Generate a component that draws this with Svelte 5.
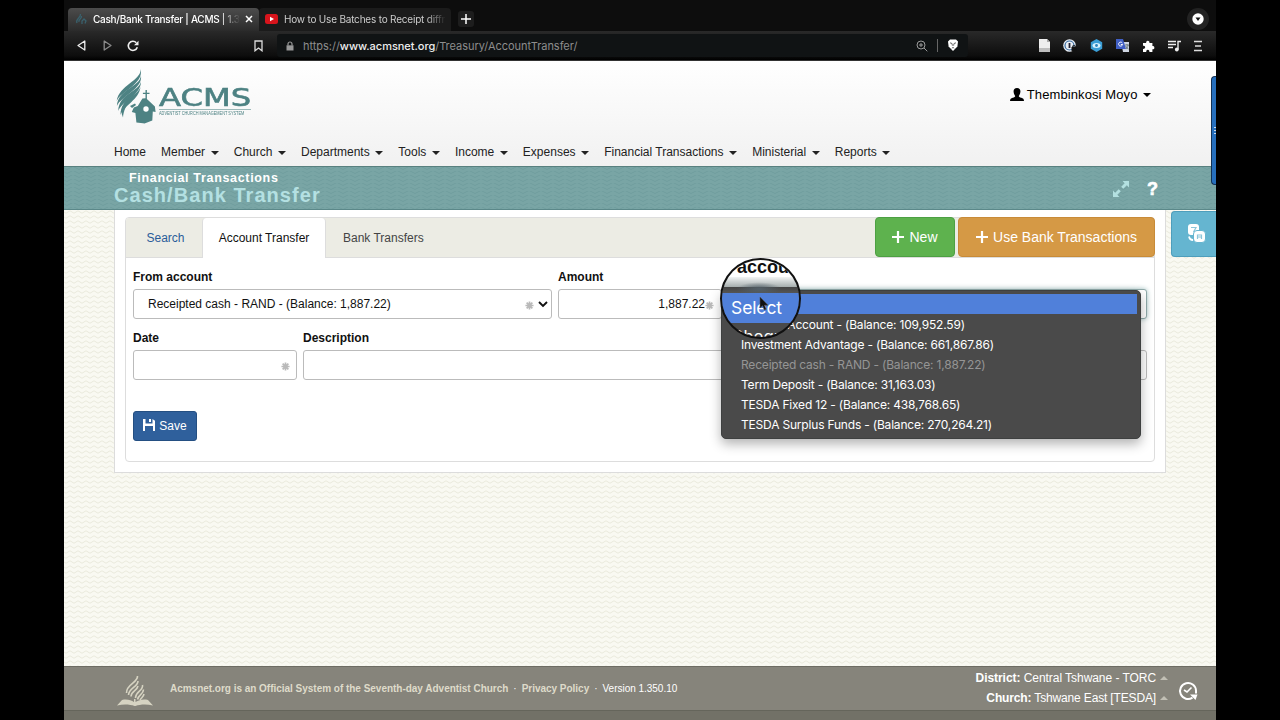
<script>
    let menu = [
        { label: "Home", caret: false },
        { label: "Member", caret: true },
        { label: "Church", caret: true },
        { label: "Departments", caret: true },
        { label: "Tools", caret: true },
        { label: "Income", caret: true },
        { label: "Expenses", caret: true },
        { label: "Financial Transactions", caret: true },
        { label: "Ministerial", caret: true },
        { label: "Reports", caret: true },
    ];

    let accounts = [
        { name: "Cheque Account - (Balance: 109,952.59)" },
        { name: "Investment Advantage - (Balance: 661,867.86)" },
        { name: "Receipted cash - RAND - (Balance: 1,887.22)", disabled: true },
        { name: "Term Deposit - (Balance: 31,163.03)" },
        { name: "TESDA Fixed 12 - (Balance: 438,768.65)" },
        { name: "TESDA Surplus Funds - (Balance: 270,264.21)" },
    ];
</script>

{#snippet star()}
    <svg class="star" width="9" height="9" viewBox="0 0 10 10">
        <path d="M5 .5v9M.5 5h9M1.8 1.8l6.4 6.4M8.2 1.8 1.8 8.2" stroke="#b9b9b9" stroke-width="1.9" />
    </svg>
{/snippet}

<div class="screen">
    <div class="tabs">
        <div class="tab active">
            <svg class="favicon" width="12" height="12" viewBox="0 0 12 12" fill="none" stroke="#39616d">
                <path d="M2 10C0 6 6 5 5.5 1M4 9C3 6 7 6 6.500 3M7 11V8l2-2 2 2-1 2.500" stroke-width="1.300" />
            </svg>
            <span class="tab-title first">Cash/Bank Transfer | ACMS | 1.3</span>
            <svg width="8" height="8" viewBox="0 0 8 8"><path d="m1 1 6 6m0-6L1 7" stroke="#fff" stroke-width="1.5" /></svg>
        </div>
        <div class="tab other">
            <svg width="13" height="10" viewBox="0 0 13 10"><rect width="13" height="10" rx="2.500" fill="#d8141c" /><path d="M5 2.800v4.400L9 5z" fill="#fff" /></svg>
            <span class="tab-title second">How to Use Batches to Receipt diffr</span>
        </div>
        <div class="new-tab">
            <svg width="10" height="10" viewBox="0 0 10 10"><path d="M5 0v10M0 5h10" stroke="#fff" stroke-width="1.500" /></svg>
        </div>
        <div class="tab-menu">
            <svg width="12" height="12" viewBox="0 0 12 12"><circle cx="6" cy="6" r="5.700" fill="#fff" /><path d="M3.500 4.500h5L6 8z" fill="#111" /></svg>
        </div>
    </div>

    <div class="toolbar">
        <svg class="back" width="9" height="11" viewBox="0 0 9 11" fill="none" stroke="#eee" stroke-width="1.300"><path d="M7.800 1v9L1 5.500z" stroke-linejoin="round" /></svg>
        <svg class="forward" width="9" height="11" viewBox="0 0 9 11" fill="none" stroke="#8b8b8b" stroke-width="1.300"><path d="M1.200 1v9L8 5.500z" stroke-linejoin="round" /></svg>
        <svg class="reload" width="12" height="12" viewBox="0 0 12 12"><path d="M10.300 7.300A4.600 4.600 0 1 1 9.300 2.700" fill="none" stroke="#eee" stroke-width="1.600" /><path d="M11.500.7v4.500H7z" fill="#eee" /></svg>
        <svg class="bookmark" width="9" height="12" viewBox="0 0 9 12"><path d="M1 1h7v9.800L4.500 8 1 10.800z" fill="none" stroke="#ddd" stroke-width="1.300" /></svg>
        <div class="address">
            <svg width="8" height="10" viewBox="0 0 8 10"><path d="M.5 4.300h7V9.500h-7z" fill="#999" /><path d="M2 4.500V3a2 2 0 0 1 4 0v1.500" fill="none" stroke="#999" stroke-width="1.200" /></svg>
            <span class="url">https://<b>www.acmsnet.org</b>/Treasury/AccountTransfer/</span>
            <svg width="12" height="12" viewBox="0 0 12 12" fill="none" stroke="#9a9a9a"><circle cx="5" cy="5" r="4" /><path d="M8 8l3.300 3.300M3 5h4M5 3v4" /></svg>
            <i class="divider"></i>
            <svg width="12" height="13" viewBox="0 0 12 13"><path d="M1 2.500 3 .6h6l2 1.900-.6 5L6 12 1.600 7.500z" fill="#fff" /><path d="M3 3.800l2 .7.4 2.200M9 3.800l-2 .7-.4 2.200M4.800 9.200 6 8.400l1.200.8" stroke="#444" stroke-width=".8" fill="none" /></svg>
        </div>
        <div class="extensions">
            <svg width="11" height="13" viewBox="0 0 11 13"><path d="M0 0h8l3 3v10H0z" fill="#eee" /><path d="M0 9h11v4H0z" fill="#bdbdbd" /><path d="M8 0v3h3" fill="#aaa" /></svg>
            <svg width="14" height="13" viewBox="0 0 14 13"><circle cx="6.500" cy="6.500" r="6.300" fill="#e9eef4" /><circle cx="6.500" cy="6.500" r="4.500" fill="none" stroke="#356aa0" stroke-width="1.200" /><path d="M6.500 4v5" stroke="#223" stroke-width="1.800" /><path d="M8.500 8h5v4.500h-5z" fill="#111" /><path d="M9.800 8V6.800h2.400V8" fill="none" stroke="#111" /></svg>
            <svg width="13" height="13" viewBox="0 0 13 13"><path d="m6.500 0 5.700 3.200v6.600L6.500 13 .8 9.800V3.200z" fill="#3b9ed6" /><ellipse cx="6.500" cy="6.500" rx="4" ry="2.500" fill="#d7f2ff" /><circle cx="6.500" cy="6.500" r="1.400" fill="#2a83bd" /></svg>
            <svg width="14" height="13" viewBox="0 0 14 13"><path d="M5 3h8v10H7z" fill="#cfd6e2" /><path d="M0 0h7l3 10H0z" fill="#405fc4" /><path d="M6.300 4A2 2 0 1 0 6.600 5.500H4.800" fill="none" stroke="#fff" /><path d="M9 6h4M11 5v1M12 6c0 2-1 3-2 4M9.800 7c.5 1.500 1.500 2.500 2.700 3" fill="none" stroke="#566" stroke-width=".8" /></svg>
            <svg width="12" height="12" viewBox="0 0 12 12"><path d="M0 3h3.200a1.700 1.700 0 1 1 3.200 0h3v3.100a1.600 1.600 0 1 1 0 3.100V12H6.300a1.600 1.600 0 1 0-3 0H0V8.800a1.600 1.600 0 1 0 0-3z" fill="#fff" /></svg>
            <svg width="13" height="12" viewBox="0 0 13 12"><path d="M0 1.500h8M0 4.500h8M0 7.500h5M10 9.500V1.500h3" fill="none" stroke="#eee" stroke-width="1.400" /><circle cx="8.800" cy="9.500" r="1.900" fill="#eee" /></svg>
            <svg width="8" height="12" viewBox="0 0 8 12"><path d="M0 1.500h8M1 6h6M0 10.500h8" stroke="#ddd" stroke-width="1.300" /></svg>
        </div>
    </div>

    <header>
        <div class="brand-row">
            <div class="logo">
                <svg width="43" height="56" viewBox="0 0 43 56" fill="#4d8283">
                    <path d="M24.700 0C25 12 3 16 .7 32 5 22 28 15 24.700 0z" />
                    <path d="M25 6.500C24 18 2 20 .9 37 5 27 27 20 25 6.500z" />
                    <path d="M25 12.500C23 23 3 24 2.200 42 6 32 25 26 25 12.500z" />
                    <path d="M24.500 18C21 28 5 28 4.500 46 8 36 23 31 24.500 18z" />
                    <path d="M16 29C8 34 3 39 7 48.500 7.500 42 10 36 16 29z" />
                    <path d="M29.500 21h1.400v2.700h2.600v1.200h-2.600V30l8 7.500.7 5.500-2.800-.5-.5 9-7.800 3-1.500-.2-6.600-.8-1-9.500-3.600-1 2-4.500 4-1.500 4.600-7.500 3.100-.2v-4.400h-2.600v-1.200h2.600z" />
                    <path d="M14 37l5-2.500 1 1.500-4 3z" />
                    <circle cx="30" cy="40" r="2.700" fill="#fff" />
                </svg>
                <div class="wordmark">
                    <div class="acms"><span>ACMS</span></div>
                    <span class="tagline">ADVENTIST CHURCH MANAGEMENT SYSTEM</span>
                </div>
            </div>
            <div class="user">
                <svg width="14" height="13" viewBox="0 0 14 13"><path d="M7 0c2.500 0 3.600 1.600 3.400 3.800C10.200 6 9.500 7 8.800 8c0 1 .8 1.200 2.500 1.800C13 10.500 14 11 14 13H0c0-2 1-2.500 2.700-3.200C4.400 9.200 5.200 9 5.200 8c-.7-1-1.400-2-1.600-4.200C3.400 1.600 4.500 0 7 0z" /></svg>
                <span>Thembinkosi Moyo</span>
                <i class="caret"></i>
            </div>
        </div>
        <nav>
            {#each menu as item}
                <a href="#top">{item.label}{#if item.caret}<i class="caret"></i>{/if}</a>
            {/each}
        </nav>
    </header>

    <div class="title-band">
        <div class="titles">
            <div class="section">Financial Transactions</div>
            <h1>Cash/Bank Transfer</h1>
        </div>
        <svg class="expand" width="16" height="16" viewBox="0 0 16 16" fill="#b3e0e0"><path d="M16 0v6.500l-2.200-2.200L10.300 7.800 8.200 5.700l3.500-3.500L9.500 0zM0 16V9.500l2.200 2.200 3.500-3.500 2.100 2.100-3.500 3.500L6.500 16z" /></svg>
        <span class="help">?</span>
    </div>

    <main>
        <div class="page">
            <div class="panel">
                <div class="panel-tabs">
                    <a class="ptab search" href="#search">Search</a>
                    <a class="ptab current" href="#transfer">Account Transfer</a>
                    <a class="ptab bank" href="#bank">Bank Transfers</a>
                    <div class="actions">
                        <button class="new">
                            <svg width="12" height="12" viewBox="0 0 12 12"><path d="M6 0v12M0 6h12" stroke="#fff" stroke-width="2.200" /></svg>
                            <span>New</span>
                        </button>
                        <button class="use-bank">
                            <svg width="12" height="12" viewBox="0 0 12 12"><path d="M6 0v12M0 6h12" stroke="#fff" stroke-width="2.200" /></svg>
                            <span>Use Bank Transactions</span>
                        </button>
                    </div>
                </div>

                <div class="form">
                    <div class="row accounts">
                        <div class="field">
                            <span class="label">From account</span>
                            <div class="input">
                                <span>Receipted cash - RAND - (Balance: 1,887.22)</span>
                                {@render star()}
                                <svg class="chevron" width="10" height="7" viewBox="0 0 10 7"><path d="m1 1 4 4 4-4" fill="none" stroke="#111" stroke-width="1.900" /></svg>
                            </div>
                        </div>
                        <div class="field">
                            <span class="label">Amount</span>
                            <div class="input amount">
                                <span>1,887.22</span>
                                {@render star()}
                            </div>
                        </div>
                        <div class="field">
                            <span class="label"></span>
                            <div class="input target"></div>
                            <div class="dropdown">
                                <div class="option selected"></div>
                                {#each accounts as account}
                                    <div class="option" class:disabled={account.disabled}>{account.name}</div>
                                {/each}
                            </div>
                            <div class="lens">
                                <div class="lens-label">accou</div>
                                <div class="lens-edge"></div>
                                <div class="lens-option">Select</div>
                                <div class="lens-next">Cheque</div>
                                <svg class="pointer" width="10" height="15" viewBox="0 0 10 15"><path d="M1 1v11l2.600-2.300L5.300 14l1.900-.8-1.700-4H9z" fill="#111" stroke="#555" stroke-width=".6" /></svg>
                            </div>
                        </div>
                    </div>
                    <div class="row details">
                        <div class="field">
                            <span class="label">Date</span>
                            <div class="input date">{@render star()}</div>
                        </div>
                        <div class="field">
                            <span class="label">Description</span>
                            <div class="input"></div>
                        </div>
                    </div>
                    <button class="save">
                        <svg width="12" height="12" viewBox="0 0 12 12"><path d="M0 0h2.500v4.500h7V0L12 1.800V12h-2V7H2v5H0zM6 0h2v3H6z" fill="#fff" /></svg>
                        <span>Save</span>
                    </button>
                </div>
            </div>
        </div>
    </main>

    <footer>
        <svg class="flame" width="38" height="32" viewBox="0 0 38 32" fill="none" stroke="#d6d3c2" stroke-width="1.600">
            <path d="M21.500 1C22 8 10 9 10.500 18M22 6c0 6-9 7-9.500 14M22 11c-1 5-7 5-7 10.500M26.500 10c1 6-7 6-7 13M27.500 14.500c0 5-5 5-6 10M28 19c-.5 3-3 4-4 6" />
            <path d="M1 30.500 6 25c5-1 9 0 12 2v-3h1.500v3C23 25 27 24 32 25l5 5.500c-7-1.500-13-1-17.500.5h-1C14 29.500 8 29 1 30.500z" fill="#d6d3c2" stroke="none" />
        </svg>
        <div class="about">
            <b>Acmsnet.org is an Official System of the Seventh-day Adventist Church</b>
            <span>·</span>
            <b>Privacy Policy</b>
            <span>·</span>
            <span class="version">Version 1.350.10</span>
        </div>
        <div class="place">
            <div class="district"><b>District:</b> Central Tshwane - TORC<i class="up"></i></div>
            <div class="church"><b>Church:</b> Tshwane East [TESDA]<i class="up"></i></div>
        </div>
        <svg class="clock" width="20" height="20" viewBox="0 0 20 20" fill="none" stroke="#fff" stroke-width="2"><path d="M14.500 16.600A8 8 0 1 1 18 9.500v3" /><path d="m6 9 3 2 4.500-4.500" stroke-width="1.600" /><path d="M12 13.500h7.500L17.500 19z" fill="#fff" stroke="none" /></svg>
    </footer>

    <div class="side-handle"><i></i></div>
    <div class="translate">
        <svg width="19" height="19" viewBox="0 0 19 19"><rect x="1" y="0" width="11" height="11" rx="3" fill="#fff" /><path d="M4 3.500h5L6.500 8" fill="none" stroke="#8cc6da" stroke-width="1.200" /><path d="M2 12.500c.5 2.500 2 3.500 4 3.500" fill="none" stroke="#fff" stroke-width="1.800" /><rect x="6.500" y="6.500" width="12" height="12" rx="3.500" fill="#fff" stroke="#65b5d0" /><path d="M10.500 15v-4h4v4M10.500 13h4" fill="none" stroke="#8cc6da" stroke-width="1.200" /></svg>
    </div>
</div>

<style>
    :global(body) {
        background: #000;
        overflow: hidden;
    }

    .screen {
        position: relative;
        box-sizing: border-box;
        width: 1152px;
        height: 720px;
        margin: 0 64px;
        display: flex;
        flex-direction: column;
        overflow: hidden;
        font-family: "Liberation Sans", Arial, sans-serif;
        font-size: 12px;
        color: #222;
    }

    svg {
        display: block;
        flex-shrink: 0;
    }

    a {
        color: inherit;
        text-decoration: none;
    }

    button {
        font-family: inherit;
        border: 0;
        padding: 0;
        display: flex;
        align-items: center;
        color: #fff;
    }

    /* browser chrome */
    .tabs {
        display: flex;
        height: 31px;
        padding: 8px 4px 0;
        box-sizing: border-box;
        background: #0d0d0d;
        font-family: Inter, sans-serif;
        font-size: 10px;
    }

    .tab {
        display: flex;
        align-items: center;
        box-sizing: border-box;
        height: 23px;
        padding-bottom: 2px;
        border-radius: 4px 4px 0 0;
    }

    .tab.active {
        width: 191px;
        padding: 0 6px 2px 7px;
        background: linear-gradient(#4c4c4c, #2b2b2b);
        color: #fff;
    }

    .favicon {
        margin-right: 6px;
    }

    .tab-title {
        overflow: hidden;
        white-space: nowrap;
    }

    .tab-title.first {
        width: 148px;
        margin-right: 5px;
        font-weight: 500;
        letter-spacing: -0.27px;
        -webkit-mask: linear-gradient(90deg, #000 86%, transparent);
        mask: linear-gradient(90deg, #000 86%, transparent);
    }

    .tab.other {
        width: 192px;
        padding-left: 6px;
        background: #1b1b1b;
        color: #ccc;
    }

    .tab-title.second {
        width: 162px;
        margin-left: 6px;
        letter-spacing: -0.2px;
        -webkit-mask: linear-gradient(90deg, #000 88%, transparent);
        mask: linear-gradient(90deg, #000 88%, transparent);
    }

    .new-tab {
        display: flex;
        align-items: center;
        justify-content: center;
        width: 16px;
        height: 16px;
        margin: 3px 0 0 7px;
        border-radius: 3px;
        background: #1d1d1d;
    }

    .tab-menu {
        display: flex;
        align-items: center;
        justify-content: center;
        width: 22px;
        height: 22px;
        margin-left: auto;
        margin-right: 3px;
        border-radius: 50%;
        background: #222;
    }

    .toolbar {
        display: flex;
        align-items: center;
        box-sizing: border-box;
        height: 30px;
        padding: 1px 14px 0 13px;
        border-bottom: 1px solid #333;
        background: linear-gradient(#292929, #0d0d0d 85%, #000);
    }

    .forward {
        margin-left: 17px;
    }

    .reload {
        margin-left: 15px;
    }

    .bookmark {
        margin-left: 115px;
    }

    .address {
        display: flex;
        align-items: center;
        box-sizing: border-box;
        width: 691px;
        height: 23px;
        margin-left: 14px;
        padding: 0 9px;
        border-radius: 3px;
        background: #101314;
        font-family: Inter, sans-serif;
        font-size: 11px;
        color: #8d8d8d;
    }

    .url {
        flex: 1;
        margin-left: 9px;
        letter-spacing: -0.03px;
    }

    .url b {
        font-weight: 500;
        color: #eee;
    }

    .divider {
        width: 1px;
        height: 13px;
        margin: 0 9px 0 9px;
        background: #666;
    }

    .extensions {
        display: flex;
        align-items: center;
        justify-content: space-between;
        width: 163px;
        margin-left: auto;
    }

    /* site header */
    header {
        height: 105px;
        padding: 0 50px;
        background: linear-gradient(#fff, #f1f1f1);
    }

    .brand-row {
        display: flex;
        justify-content: space-between;
        height: 84px;
    }

    .logo {
        display: flex;
        padding: 8px 0 0 2px;
    }

    .wordmark {
        display: flex;
        flex-direction: column;
        color: #4d8283;
        padding-top: 15px;
    }

    .acms {
        height: 25px;
        width: 92px;
        border-bottom: 1px solid #9cb9b9;
        font-family: "DejaVu Sans", sans-serif;
        font-size: 24px;
        line-height: 29px;
        -webkit-text-stroke: 0.6px #4d8283;
    }

    .acms span {
        display: inline-block;
        transform: scaleX(1.34);
        transform-origin: left;
    }

    .tagline {
        margin-top: 1px;
        font-size: 4.500px;
        line-height: 6px;
        white-space: nowrap;
        transform: scaleX(0.86);
        transform-origin: left;
        width: 92px;
    }

    .user {
        display: flex;
        align-items: center;
        height: 20px;
        margin-top: 24px;
        padding-right: 15px;
        font-size: 13px;
        letter-spacing: 0.1px;
        color: #000;
    }

    .user span {
        margin-left: 3px;
    }

    .caret {
        display: inline-block;
        width: 0;
        height: 0;
        margin-left: 5.500px;
        border: 4px solid transparent;
        border-top-color: currentColor;
        border-bottom: 0;
        vertical-align: 1px;
    }

    nav {
        display: flex;
        gap: 15.100px;
        line-height: 14px;
    }

    nav a {
        white-space: nowrap;
    }

    .title-band {
        display: flex;
        align-items: center;
        box-sizing: border-box;
        height: 44px;
        padding: 0 58px 0 50px;
        border-top: 1px solid #58807f;
        border-bottom: 1px solid #5b8889;
        background: #79a5a5 url("data:image/svg+xml,%3Csvg xmlns='http://www.w3.org/2000/svg' width='12' height='4'%3E%3Cpath d='M0 1q3 3 6 0t6 0' fill='none' stroke='%23709d9e' stroke-width='1'/%3E%3C/svg%3E");
    }

    .titles {
        flex: 1;
        font-weight: bold;
    }

    .section {
        padding-left: 15px;
        font-size: 12.500px;
        line-height: 15px;
        letter-spacing: 0.67px;
        color: #fff;
    }

    h1 {
        margin: 0;
        font-size: 20px;
        line-height: 19px;
        letter-spacing: 1.050px;
        color: #b4e0e2;
    }

    .expand {
        margin-top: 2px;
    }

    .help {
        margin: 3px 0 0 18px;
        font-size: 18px;
        font-weight: bold;
        -webkit-text-stroke: 0.6px #fff;
        color: #fff;
    }

    main {
        height: 457px;
        padding: 0 50px;
        background: #f9f9f2 url("data:image/svg+xml,%3Csvg xmlns='http://www.w3.org/2000/svg' width='8' height='5'%3E%3Cpath d='M0 2q2 2.500 4 0t4 0' fill='none' stroke='%23e9e9dc' stroke-width='1'/%3E%3C/svg%3E");
    }

    .page {
        box-sizing: border-box;
        width: 1052px;
        height: 263px;
        padding: 7px 10px 10px;
        border: 1px solid #dcdcdc;
        border-top: 0;
        background: #fff;
    }

    .panel {
        box-sizing: border-box;
        height: 245px;
        border: 1px solid #ddd;
        border-radius: 4px;
    }

    .panel-tabs {
        display: flex;
        box-sizing: border-box;
        height: 40px;
        border-bottom: 1px solid #ddd;
        border-radius: 3px 3px 0 0;
        background: #ecece4;
    }

    .ptab {
        display: flex;
        align-items: center;
        justify-content: center;
        box-sizing: border-box;
        height: 40px;
    }

    .ptab.search {
        width: 76px;
        padding-left: 3px;
        color: #2a5c99;
    }

    .ptab.current {
        width: 124px;
        padding: 1px 0 0 0;
        border: 1px solid #ddd;
        border-width: 0 1px;
        border-radius: 4px 4px 0 0;
        background: #fff;
        color: #111;
    }

    .ptab.bank {
        padding-left: 17px;
        color: #444;
    }

    .actions {
        display: flex;
        gap: 3px;
        height: 40px;
        margin: -1px -1px 0 auto;
    }

    .actions button {
        box-sizing: border-box;
        justify-content: center;
        gap: 5px;
        padding-top: 1px;
        border-radius: 4px;
        font-size: 14px;
    }

    .new {
        width: 80px;
        border: 1px solid #4da043;
        background: #5eb24e;
    }

    .use-bank {
        width: 197px;
        border: 1px solid #c88b38;
        background: #d59945;
    }

    .form {
        padding: 12px 7px;
    }

    .row {
        display: grid;
        column-gap: 6px;
    }

    .accounts {
        grid-template-columns: 419px 164px 419px;
    }

    .details {
        margin-top: 12px;
        grid-template-columns: 164px 844px;
    }

    .field {
        position: relative;
    }

    .label {
        display: block;
        height: 19px;
        line-height: 14px;
        font-weight: bold;
        color: #111;
    }

    .input {
        display: flex;
        align-items: center;
        box-sizing: border-box;
        height: 30px;
        padding: 0 3px 0 14px;
        border: 1px solid #bbb;
        border-radius: 3px;
        background: #fff;
        color: #111;
    }

    .input .star {
        margin: 4px 0 0 auto;
    }

    .chevron {
        margin: 2px 0 0 4px;
    }

    .input.amount {
        justify-content: flex-end;
        padding-right: 7px;
    }

    .input.amount .star {
        margin-left: 0;
    }

    .input.date {
        padding-right: 6px;
    }

    .input.target {
        border-color: #8fa9a9;
        box-shadow: 0 0 5px #9fc0c0;
    }

    .dropdown {
        position: absolute;
        z-index: 1;
        left: -7px;
        top: 20px;
        box-sizing: border-box;
        width: 420px;
        height: 149px;
        padding: 3px 4px;
        border: 1px solid #3e4040;
        border-radius: 5px;
        background: #4a4a4a;
        box-shadow: 0 5px 12px rgba(0, 0, 0, 0.3);
        font-family: Inter, sans-serif;
        font-size: 12px;
        letter-spacing: -0.19px;
        color: #fff;
    }

    .option {
        height: 20px;
        padding-left: 15px;
        line-height: 20px;
        white-space: nowrap;
    }

    .option.selected {
        margin: 0 -1px 1px;
        background: #5080da;
    }

    .option.disabled {
        color: #959595;
    }

    /* screen magnifier following the pointer */
    .lens {
        position: absolute;
        z-index: 2;
        left: -8px;
        top: -12px;
        box-sizing: border-box;
        width: 81px;
        height: 81px;
        border: 2px solid #111;
        border-radius: 50%;
        overflow: hidden;
        background: #4a4a4a;
    }

    .lens-label {
        height: 17px;
        padding-left: 15px;
        background: #fff;
        font-size: 18px;
        font-weight: bold;
        line-height: 14px;
        color: #111;
    }

    .lens-edge {
        height: 16px;
        background:
            radial-gradient(ellipse at 48% 75%, #536068 0, transparent 40%),
            linear-gradient(#f2f4f4, #a8b0b0 60%, #444 62%, #555);
    }

    .lens-option {
        height: 30px;
        padding-left: 9px;
        background: #5080da;
        font-family: Inter, sans-serif;
        font-size: 17.500px;
        line-height: 29px;
        letter-spacing: -0.1px;
        color: #fff;
    }

    .lens-next {
        margin-top: 5px;
        padding-left: 9px;
        font-family: Inter, sans-serif;
        font-size: 17px;
        line-height: 18px;
        color: #fff;
    }

    .pointer {
        position: absolute;
        left: 37px;
        top: 36px;
    }

    .save {
        box-sizing: border-box;
        width: 64px;
        height: 30px;
        margin-top: 31px;
        justify-content: center;
        gap: 4px;
        border: 1px solid #244f82;
        border-radius: 3px;
        background: #2f609c;
        font-size: 12px;
    }

    .save svg {
        margin-top: -2px;
    }

    footer {
        display: flex;
        box-sizing: border-box;
        height: 54px;
        padding: 0 18px 0 52px;
        border-top: 1px solid #6d6c63;
        background: linear-gradient(#86847b 0 43px, #65655b 43px 44px, #727167 44px);
        color: #fff;
    }

    .flame {
        margin-top: 8px;
    }

    .about {
        flex: 1;
        display: flex;
        gap: 5px;
        margin: 16px 0 0 16px;
        font-size: 10px;
        line-height: 12px;
        letter-spacing: -0.02px;
    }

    .about b {
        color: #dedbca;
    }

    .place {
        margin-top: 1px;
        text-align: right;
        line-height: 20px;
    }

    .district {
        letter-spacing: -0.05px;
    }

    .church {
        letter-spacing: -0.15px;
    }

    .up {
        display: inline-block;
        margin-left: 4px;
        border: 4px solid transparent;
        border-top: 0;
        border-bottom-color: #c2c0b5;
        vertical-align: 2px;
    }

    .clock {
        margin: 14px 0 0 10px;
    }

    .side-handle {
        position: absolute;
        right: 0;
        top: 76px;
        display: flex;
        align-items: center;
        justify-content: flex-end;
        box-sizing: border-box;
        width: 5px;
        height: 109px;
        border: 1px solid #123155;
        border-right: 0;
        border-radius: 4px 0 0 4px;
        background: #266fbd;
    }

    .side-handle i {
        width: 2px;
        height: 7px;
        background: repeating-linear-gradient(#cde 0 1px, transparent 1px 3px);
    }

    .translate {
        position: absolute;
        right: 0;
        top: 211px;
        display: flex;
        box-sizing: border-box;
        width: 45px;
        height: 46px;
        padding: 12px 0 0 15px;
        border: 1px solid #4e9ebc;
        border-right: 0;
        border-radius: 4px 0 0 4px;
        background: #65b5d0;
    }
</style>
